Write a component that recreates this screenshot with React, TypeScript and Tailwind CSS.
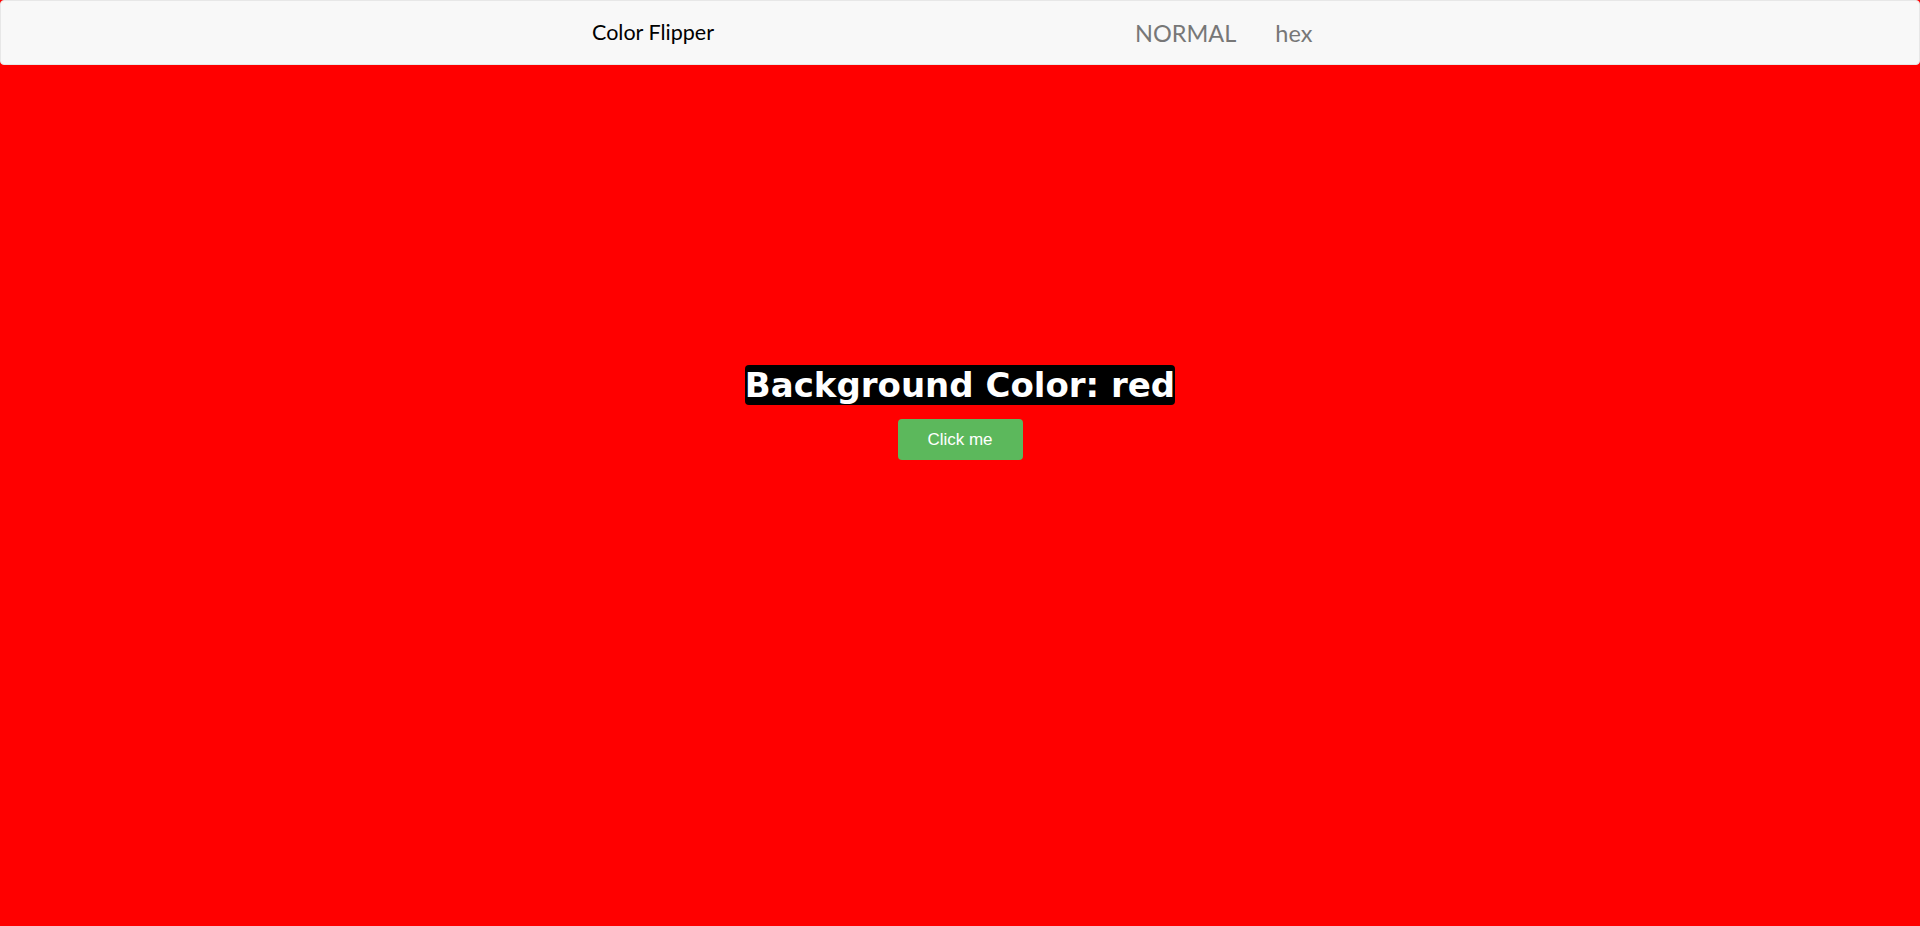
export default function App() {
  return (
    <div className="min-h-[926px] bg-[#ff0000]">

      {/* Navbar */}

      <nav className="flex h-[65px] items-center rounded-[4px] border border-[#e7e7e7] bg-[#f8f8f8] font-['Lato',sans-serif]">

        <span className="ml-[591px] w-[123px] whitespace-nowrap text-[21.5px] leading-none text-black">
          Color Flipper
        </span>

        <div className="ml-[420px] flex items-center gap-[39px] pt-[2px] text-[23.5px] leading-none text-[#777]">
          <a href="#">NORMAL</a>
          <a href="#">hex</a>
        </div>

      </nav>

      {/* Main */}

      <main className="flex flex-col items-center pt-[300px]">

        <h1 className="rounded-[4px] bg-black font-['DejaVu_Sans',sans-serif] text-[34px] font-bold leading-[40px] text-white">
          Background Color: red
        </h1>

        <button className="mt-[14px] h-[41px] w-[125px] rounded-[4px] bg-[#5cb85c] font-['Liberation_Sans',sans-serif] text-[17px] text-white">
          Click me
        </button>

      </main>

    </div>
  );
}
